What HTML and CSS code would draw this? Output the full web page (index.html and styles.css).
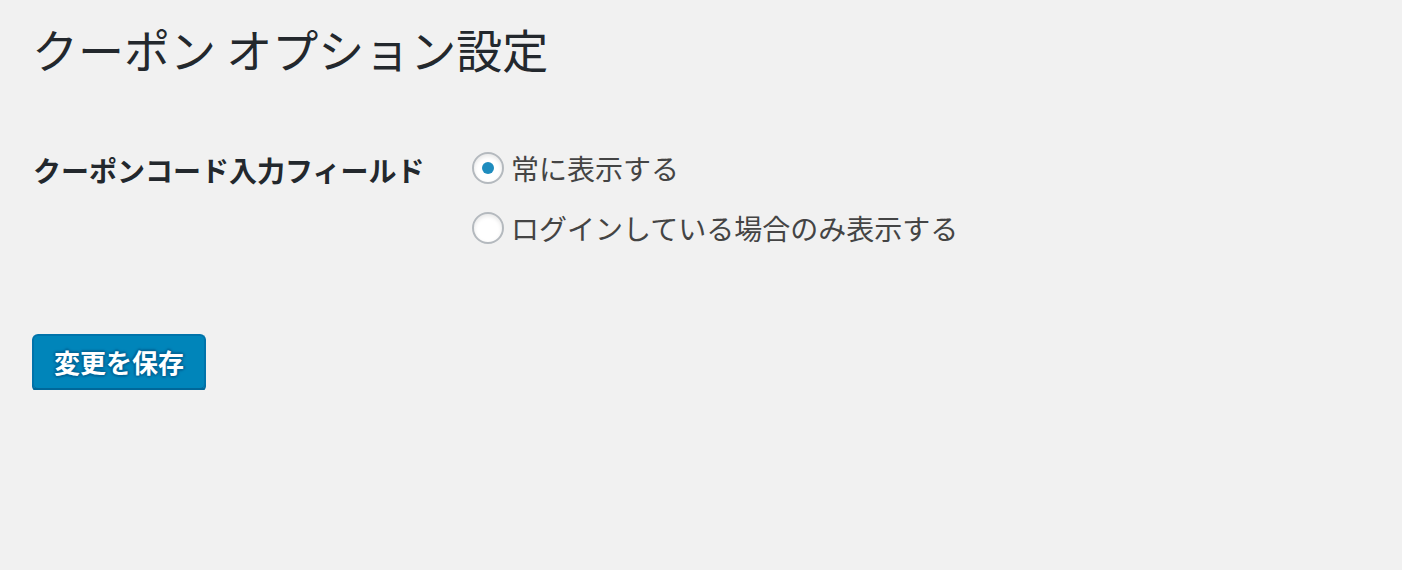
FILE: index.html
```html
<!DOCTYPE html>
<html lang="ja">
<head>
<meta charset="utf-8">
<link rel="stylesheet" href="styles.css">
</head>
<body>
<div class="wrap">
  <h1 class="title">クーポン オプション設定</h1>
  <div class="form-row">
    <div class="label">クーポンコード入力フィールド</div>
    <div class="options">
      <label class="option"><span class="radio checked"></span><span>常に表示する</span></label>
      <label class="option"><span class="radio"></span><span>ログインしている場合のみ表示する</span></label>
    </div>
  </div>
  <div class="submit">
    <button class="button-primary">変更を保存</button>
  </div>
</div>
</body>
</html>
```
FILE: styles.css
```css
html, body {
  margin: 0;
  padding: 0;
  background: #f1f1f1;
}
body {
  font-family: "Noto Sans CJK JP", "Noto Sans", sans-serif;
  color: #23282d;
}
.wrap {
  padding: 18px 0 0 31px;
}
.title {
  margin: 0;
  font-size: 46px;
  font-weight: 400;
  line-height: 60px;
  color: #23282d;
  padding-left: 1px;
}
.form-row {
  display: flex;
  margin-top: 70px;
}
.label {
  width: 439px;
  font-size: 28px;
  font-weight: 700;
  line-height: 40px;
  color: #23282d;
  padding-left: 2px;
  margin-top: 2px;
}
.options {
  display: flex;
  flex-direction: column;
  gap: 20px;
}
.option {
  display: flex;
  align-items: center;
  gap: 7px;
  font-size: 28px;
  line-height: 40px;
  color: #444;
}
.radio {
  width: 28px;
  height: 28px;
  border: 2px solid #b4b9be;
  border-radius: 50%;
  background: #fff;
  box-shadow: inset 0 2px 4px rgba(0,0,0,0.1);
  display: flex;
  align-items: center;
  justify-content: center;
  flex: none;
}
.radio.checked::after {
  content: "";
  width: 12px;
  height: 12px;
  border-radius: 50%;
  background: #1e8cbe;
}
.submit {
  margin-top: 86px;
}
.button-primary {
  font-family: "Noto Sans CJK JP", "Noto Sans", sans-serif;
  font-size: 26px;
  font-weight: 700;
  color: #fff;
  background: #0085ba;
  border: 2px solid #0073aa;
  border-bottom-color: #006799;
  border-radius: 6px;
  box-shadow: 0 2px 0 #006799;
  text-shadow: 0 -2px 2px #006799, 2px 0 2px #006799, 0 2px 2px #006799, -2px 0 2px #006799;
  width: 174px;
  height: 56px;
  padding: 0;
  margin-left: 1px;
  line-height: 52px;
}
```
